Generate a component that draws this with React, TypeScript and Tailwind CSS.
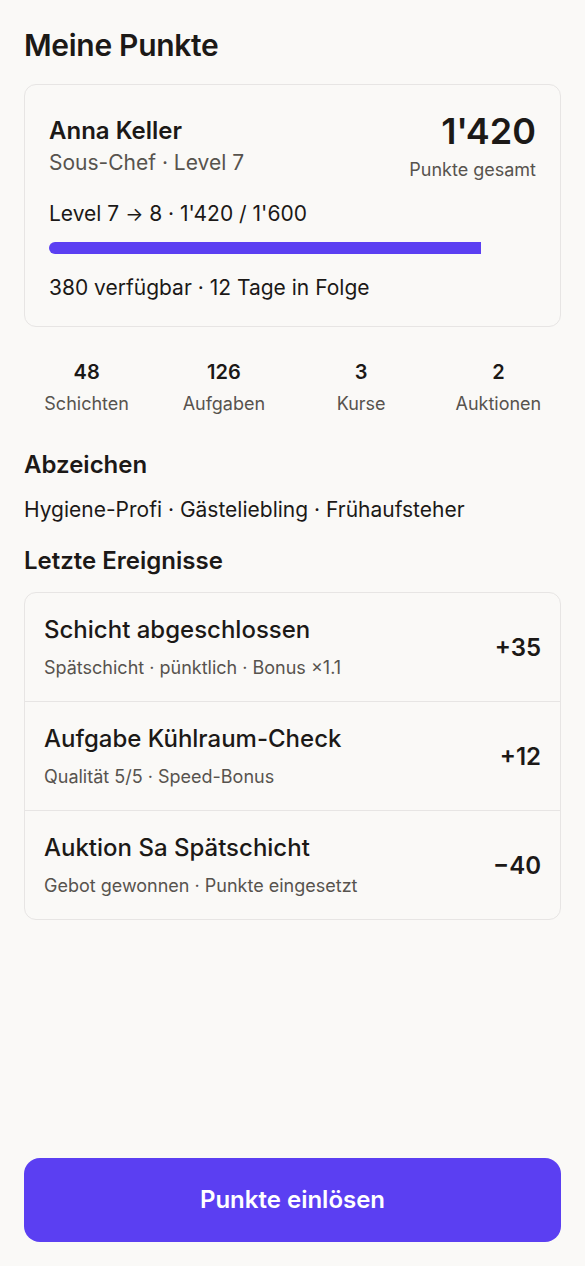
import React from "react";

const STATS = [
  { value: "48", label: "Schichten" },
  { value: "126", label: "Aufgaben" },
  { value: "3", label: "Kurse" },
  { value: "2", label: "Auktionen" },
];

const EVENTS = [
  { title: "Schicht abgeschlossen", meta: "Spätschicht · pünktlich · Bonus ×1.1", points: "+35" },
  { title: "Aufgabe Kühlraum-Check", meta: "Qualität 5/5 · Speed-Bonus", points: "+12" },
  { title: "Auktion Sa Spätschicht", meta: "Gebot gewonnen · Punkte eingesetzt", points: "−40" },
];

export default function App() {
  const progress = (1420 / 1600) * 100;

  return (
    <div
      className="min-h-screen w-full flex flex-col bg-[#faf9f7] text-[#1c1917] px-6 pt-[27px] pb-6"
      style={{ fontFamily: "Inter, 'Noto Sans', sans-serif" }}
    >
      <h1 className="text-[30px] leading-[36px] font-semibold tracking-[-0.01em]">Meine Punkte</h1>

      {/* ── Summary card ── */}
      <div className="mt-[21px] rounded-xl border border-[#e7e5e4] bg-[#faf9f7] p-6">
        <div className="flex items-center justify-between">
          <div className="flex flex-col gap-[3px]">
            <div className="text-[24px] leading-[30px] font-semibold">Anna Keller</div>
            <div className="text-[21px] leading-[28px] text-[#57534e]">Sous-Chef · Level 7</div>
          </div>
          <div className="flex flex-col items-end">
            <div className="text-[36px] leading-[44px] font-semibold">1'420</div>
            <div className="mt-1 text-[18px] leading-[26px] text-[#57534e]">Punkte gesamt</div>
          </div>
        </div>

        <div className="mt-[17px] text-[21px] leading-[28px]">
          Level 7 <span className="text-[19px]">→</span> 8 · 1'420 / 1'600
        </div>
        <div className="mt-[13px] h-3 w-full overflow-hidden rounded-full">
          <div className="h-full bg-[#5b3ff2]" style={{ width: `${progress}%` }} />
        </div>
        <div className="mt-5 text-[21px] leading-[28px]">380 verfügbar · 12 Tage in Folge</div>
      </div>

      {/* ── Stats ── */}
      <div className="mt-[31px] grid grid-cols-4 gap-3">
        {STATS.map((s) => (
          <div key={s.label} className="flex flex-col items-center gap-1.5">
            <div className="text-[20px] leading-[28px] font-semibold">{s.value}</div>
            <div className="text-[18px] leading-[24px] text-[#57534e]">{s.label}</div>
          </div>
        ))}
      </div>

      <h2 className="mt-[34px] text-[24px] leading-[30px] font-semibold">Abzeichen</h2>
      <div className="mt-4 text-[21px] leading-[28px]">Hygiene-Profi · Gästeliebling · Frühaufsteher</div>

      <h2 className="mt-[22px] text-[24px] leading-[30px] font-semibold">Letzte Ereignisse</h2>

      {/* ── Events ── */}
      <div className="mt-4 rounded-xl border border-[#e7e5e4] overflow-hidden">
        {EVENTS.map((e, i) => (
          <div
            key={e.title}
            className={`flex items-center justify-between px-[19px] pt-[22px] pb-[21px] ${i > 0 ? "border-t border-[#e7e5e4]" : ""}`}
          >
            <div className="flex flex-col gap-[11px]">
              <div className="text-[24px] leading-[30px] font-medium">{e.title}</div>
              <div className="text-[18px] leading-[24px] text-[#57534e]">{e.meta}</div>
            </div>
            <div className="text-[24px] leading-[30px] font-semibold">{e.points}</div>
          </div>
        ))}
      </div>

      <button className="mt-auto h-[84px] w-full rounded-2xl bg-[#5b3ff2] text-[24px] font-semibold text-white">
        Punkte einlösen
      </button>
    </div>
  );
}
